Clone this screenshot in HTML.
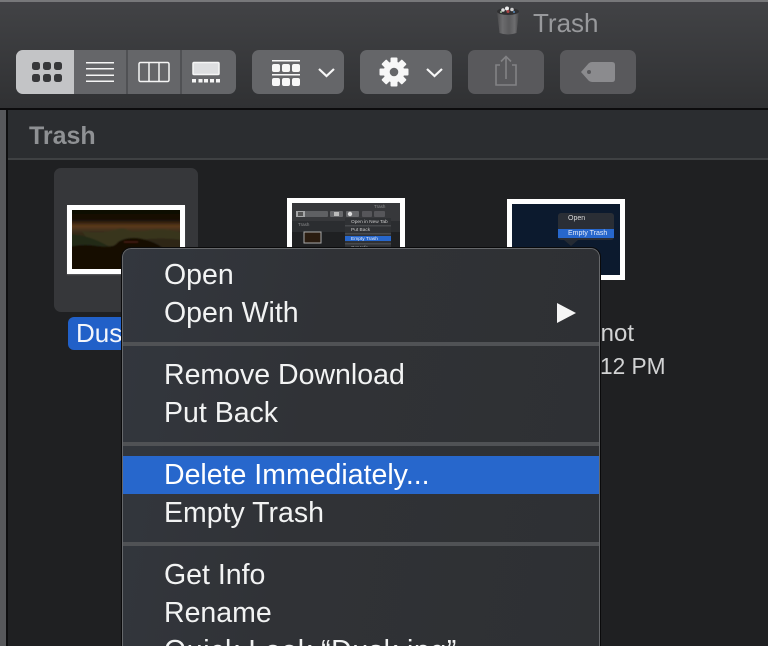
<!DOCTYPE html>
<html><head><meta charset="utf-8">
<style>
html,body{margin:0;padding:0;background:#1f2022}
#p{position:relative;width:768px;height:646px;overflow:hidden;background:#1f2022;font-family:"Liberation Sans",sans-serif}
#p div,#p svg{position:absolute}
.it{left:41px;color:#f2f3f3;font-size:28.5px;line-height:38px;height:38px;white-space:nowrap;transform:translateY(1px)}
.sep{left:0;right:0;height:4px;background:#505255}
.btn{background:#656669;border-radius:7px;top:50px;height:44px}
</style></head><body>
<div id="p">
<div style="left:0;top:0;width:768px;height:108px;background:linear-gradient(#424346,#303133)"></div>
<div style="left:0;top:0;width:768px;height:2px;background:#77787a"></div>
<div style="left:0;top:108px;width:768px;height:2px;background:#0c0c0d"></div>
<div style="left:533px;top:8px;font-size:26px;line-height:30px;color:#98999c">Trash</div>
<svg style="left:494px;top:5px" width="28" height="32" viewBox="0 0 28 32"><defs><linearGradient id="t" x1="0" x2="1"><stop offset="0" stop-color="#4a4a4c"/><stop offset=".25" stop-color="#6c6c6e"/><stop offset=".55" stop-color="#5a5a5c"/><stop offset=".8" stop-color="#6e6e70"/><stop offset="1" stop-color="#454547"/></linearGradient></defs><path d="M3 6H25L22.500 28Q14 31 5.500 28Z" fill="url(#t)"/><ellipse cx="14" cy="6.500" rx="11" ry="3.500" fill="#303032"/><circle cx="9" cy="5" r="1.800" fill="#ddd"/><circle cx="13" cy="3.500" r="2" fill="#eee"/><circle cx="18" cy="4.500" r="1.800" fill="#ccc"/><circle cx="14" cy="6.500" r="1.500" fill="#a44"/><circle cx="20" cy="7" r="1" fill="#58b"/><circle cx="7" cy="7" r="1" fill="#9b9"/></svg>

<div class="btn" style="left:16px;width:220px"></div>
<div style="left:16px;top:50px;width:58px;height:44px;background:#c3c4c6;border-radius:7px 0 0 7px"></div>
<div style="left:126px;top:50px;width:2px;height:44px;background:#505154"></div>
<div style="left:180px;top:50px;width:2px;height:44px;background:#505154"></div>
<svg style="left:16px;top:50px" width="220" height="44" viewBox="0 0 220 44">
<g fill="#37383a"><rect x="16" y="12" width="8" height="8" rx="2.500"/><rect x="27" y="12" width="8" height="8" rx="2.500"/><rect x="38" y="12" width="8" height="8" rx="2.500"/><rect x="16" y="24" width="8" height="8" rx="2.500"/><rect x="27" y="24" width="8" height="8" rx="2.500"/><rect x="38" y="24" width="8" height="8" rx="2.500"/></g>
<g fill="#f5f5f5"><rect x="70" y="12" width="28" height="1.500"/><rect x="70" y="18" width="28" height="1.500"/><rect x="70" y="24.500" width="28" height="1.500"/><rect x="70" y="30.500" width="28" height="1.500"/></g>
<g fill="none" stroke="#f5f5f5" stroke-width="1.500"><rect x="123" y="12.500" width="30" height="19" rx="1.500"/><path d="M133 12.500V31.500M143 12.500V31.500"/></g>
<rect x="177" y="12.500" width="26" height="12" rx="1" fill="#dddee0" stroke="#f5f5f5" stroke-width="1.500"/>
<g fill="#f5f5f5"><rect x="176" y="29" width="4" height="3.500"/><rect x="182.500" y="29" width="4" height="3.500"/><rect x="188" y="29" width="4" height="3.500"/><rect x="194" y="29" width="4" height="3.500"/><rect x="200" y="29" width="4" height="3.500"/></g>
</svg>

<div class="btn" style="left:252px;width:92px"></div>
<svg style="left:252px;top:50px" width="92" height="44" viewBox="0 0 92 44">
<g fill="#f7f7f7"><rect x="20" y="10" width="28" height="1.500"/><rect x="20" y="24" width="28" height="1.500"/><rect x="20" y="14" width="8" height="8" rx="2"/><rect x="30" y="14" width="8" height="8" rx="2"/><rect x="40" y="14" width="8" height="8" rx="2"/><rect x="20" y="28" width="8" height="8" rx="2"/><rect x="30" y="28" width="8" height="8" rx="2"/><rect x="40" y="28" width="8" height="8" rx="2"/></g>
<path d="M67 19L74.500 26L82 19" fill="none" stroke="#f7f7f7" stroke-width="2.200"/>
</svg>

<div class="btn" style="left:360px;width:92px"></div>
<svg style="left:360px;top:50px" width="92" height="44" viewBox="0 0 92 44">
<g fill="#f7f7f7" transform="translate(34 22)"><circle r="10.500"/><rect x="-3.500" y="-14.500" width="7" height="29" rx="1"/><rect x="-3.500" y="-14.500" width="7" height="29" rx="1" transform="rotate(45)"/><rect x="-3.500" y="-14.500" width="7" height="29" rx="1" transform="rotate(90)"/><rect x="-3.500" y="-14.500" width="7" height="29" rx="1" transform="rotate(135)"/></g>
<circle cx="34" cy="22" r="4.300" fill="#656669"/>
<path d="M67 19L74.500 26L82 19" fill="none" stroke="#f7f7f7" stroke-width="2.200"/>
</svg>

<div class="btn" style="left:468px;width:76px;background:#59595c"></div>
<svg style="left:468px;top:50px" width="76" height="44" viewBox="0 0 76 44">
<path d="M32 15H28V35H48V15H44M38 29V7M33 11.500L38 6.500L43 11.500" fill="none" stroke="#828285" stroke-width="1.600"/>
</svg>
<div class="btn" style="left:560px;width:76px;background:#59595c"></div>
<svg style="left:560px;top:50px" width="76" height="44" viewBox="0 0 76 44">
<path d="M32 12H52Q55 12 55 15V29Q55 32 52 32H32Q30 32 28.500 30.500L21 22L28.500 13.500Q30 12 32 12Z" fill="#8b8b8e"/><circle cx="29" cy="22" r="2" fill="#59595c"/>
</svg>

<div style="left:0;top:110px;width:6px;height:536px;background:#57585b"></div>
<div style="left:6px;top:110px;width:2px;height:536px;background:#0e0e0f"></div>
<div style="left:8px;top:110px;width:760px;height:48px;background:#2b2d30"></div>
<div style="left:8px;top:158px;width:760px;height:2px;background:#3f4143"></div>
<div style="left:29px;top:122px;font-size:25px;line-height:28px;font-weight:bold;color:#8f9194">Trash</div>

<div style="left:54px;top:168px;width:144px;height:144px;background:#36373a;border-radius:7px"></div>
<div style="left:67px;top:205px;width:108px;height:59px;border:5px solid #fff;background:#120b07;box-shadow:0 1px 1px rgba(255,255,255,.2)"></div>
<svg style="left:72px;top:210px" width="108" height="59" viewBox="0 0 108 59">
<defs><linearGradient id="s" x1="0" x2="0" y1="0" y2="1"><stop offset="0" stop-color="#0c0704"/><stop offset=".2" stop-color="#150c06"/><stop offset=".3" stop-color="#5c3a1a"/><stop offset=".38" stop-color="#3a2e1a"/><stop offset=".55" stop-color="#211e12"/><stop offset=".72" stop-color="#1c1209"/><stop offset="1" stop-color="#120905"/></linearGradient><filter id="b" x="-5%" y="-5%" width="110%" height="110%"><feGaussianBlur stdDeviation=".8"/></filter></defs>
<g filter="url(#b)">
<rect x="-4" y="-4" width="116" height="67" fill="url(#s)"/>
<path d="M10 21Q24 24 34 22L46 19Q52 17 60 22L74 21Q90 16 112 24V36H20Z" fill="#38351f"/>
<path d="M-4 24Q18 25 36 36H-4Z" fill="#232c17"/>
<path d="M60 32Q80 26 112 30V38H66Z" fill="#2e2817"/>
<path d="M-4 37Q14 33 30 37Q42 38 46 32Q58 25 74 30Q90 34 96 44L112 63H-4Z" fill="#170b06"/>
<path d="M52 32H66" stroke="#4e2014" stroke-width="1"/>
<path d="M86 40H112V44H92Z" fill="#5e3c14"/>
<path d="M92 44H112V63H92Z" fill="#100805"/>
</g>
</svg>

<div style="left:287px;top:198px;width:108px;height:60px;border:5px solid #fff;background:#27292c"></div>
<svg style="left:292px;top:203px;font-family:'Liberation Sans',sans-serif;filter:blur(.3px)" width="108" height="50" viewBox="0 0 108 50">
<rect width="108" height="18" fill="#37383b"/><rect y="18" width="108" height="11" fill="#2b2d30"/><rect y="29" width="108" height="21" fill="#1f2022"/>
<rect x="4" y="8" width="32" height="6" rx="1" fill="#5f6063"/><rect x="4" y="8" width="9" height="6" fill="#a5a6a8"/><rect x="6" y="9" width="5" height="4" fill="#555"/>
<rect x="38" y="8" width="13" height="6" rx="1" fill="#68696c"/><rect x="42" y="9" width="5" height="4" fill="#bbb"/>
<rect x="54" y="8" width="13" height="6" rx="1" fill="#68696c"/><circle cx="58" cy="11" r="2.200" fill="#ddd"/>
<rect x="70" y="8" width="10" height="6" rx="1" fill="#56565a"/><rect x="82" y="8" width="11" height="6" rx="1" fill="#56565a"/>
<text x="82" y="5" font-size="4.500" fill="#8e8f91">Trash</text>
<text x="6" y="23" font-size="4.500" fill="#8e8f91">Trash</text>
<rect x="12" y="29" width="17" height="11" fill="#2a1c10" stroke="#aaa"/>
<rect x="53" y="15" width="46" height="35" fill="#2f3134"/><rect x="53" y="33" width="46" height="5" fill="#2767cc"/>
<rect x="53" y="22" width="46" height="1.500" fill="#47494c"/><rect x="53" y="30" width="46" height="1.500" fill="#47494c"/><rect x="53" y="40" width="46" height="1.500" fill="#47494c"/>
<text x="59" y="20" font-size="4.800" fill="#c8c8c8">Open in New Tab</text>
<text x="59" y="28" font-size="4.800" fill="#c8c8c8">Put Back</text>
<text x="59" y="37" font-size="4.800" fill="#e8eefa">Empty Trash</text>
<text x="59" y="46" font-size="4.800" fill="#b0b0b0">Get Info</text>
</svg>

<div style="left:507px;top:199px;width:108px;height:71px;border:5px solid #fff;background:#0c1a2e"></div>
<div style="left:558px;top:213px;width:56px;height:27px;background:#2a2e35;border-radius:3px"></div>
<div style="left:558px;top:229px;width:56px;height:9px;background:#2767cc"></div>
<div style="left:568px;top:213px;font-size:7px;line-height:12px;color:#d8d8d8">Open</div>
<div style="left:568px;top:228px;font-size:7px;line-height:11px;color:#e6ecf8">Empty Trash</div>
<svg style="left:564px;top:240px" width="14" height="6"><path d="M0 0H14L7 6Z" fill="#242a33"/></svg>

<div style="left:68px;top:317px;width:70px;height:33px;background:#2160c8;border-radius:6px"></div>
<div style="left:76px;top:317px;font-size:26px;line-height:33px;color:#f4f6fb">Dus</div>
<div style="left:600px;top:319px;width:34px;height:30px;overflow:hidden;font-size:24px;line-height:30px;color:#d2d3d4;white-space:nowrap;text-align:right"><span style="position:absolute;right:0">not</span></div>
<div style="left:600px;top:351px;font-size:22.7px;line-height:30px;color:#d2d3d4">12 PM</div>

<div style="left:122px;top:248px;width:476px;height:420px;background:linear-gradient(100deg,#33373e,#303236 40%,#2e3033);border:1px solid #66686b;outline:1px solid #0a0a0b;border-radius:9px;overflow:hidden;box-sizing:content-box">
<div class="it" style="top:6px">Open</div>
<div class="it" style="top:44px">Open With</div>
<svg style="left:434px;top:54px" width="20" height="20"><path d="M0 0L19 10L0 20Z" fill="#f5f5f5"/></svg>
<div class="sep" style="top:93px"></div>
<div class="it" style="top:106px">Remove Download</div>
<div class="it" style="top:144px">Put Back</div>
<div class="sep" style="top:193px"></div>
<div style="left:0;right:0;top:207px;height:38px;background:#2767cc"></div>
<div class="it" style="top:206px;color:#fff">Delete Immediately...</div>
<div class="it" style="top:244px">Empty Trash</div>
<div class="sep" style="top:293px"></div>
<div class="it" style="top:306px">Get Info</div>
<div class="it" style="top:344px">Rename</div>
<div class="it" style="top:382px;letter-spacing:.6px">Quick Look “Dusk.jpg”</div>
</div>
</div>
</body></html>
